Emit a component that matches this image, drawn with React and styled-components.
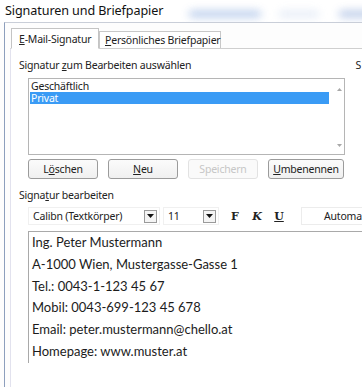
import React from "react";
import styled, { createGlobalStyle } from "styled-components";

const Global = createGlobalStyle`
  html, body { margin: 0; padding: 0; background: #fff; }
  body { font-family: "Noto Sans", "Open Sans", sans-serif; }
`;

const Window = styled.div`
  width: 362px;
  height: 387px;
  overflow: hidden;
  background: #fdfdfd;
  color: #1e1e1e;
  display: flex;
  flex-direction: column;
`;

const TitleBar = styled.div`
  height: 22px;
  display: flex;
  align-items: center;
  padding-left: 5px;
  background: #fff;
  flex-shrink: 0;
  overflow: hidden;
`;

const Title = styled.span`
  font-size: 12.6px;
  color: #111;
  letter-spacing: -0.1px;
  margin-top: -2px;
  white-space: nowrap;
  flex-shrink: 0;
`;

const Blur = styled.span`
  display: block;
  flex-shrink: 0;
  height: ${(p) => p.h || 6}px;
  width: ${(p) => p.w}px;
  margin-left: ${(p) => p.ml}px;
  margin-top: 6px;
  background: ${(p) => p.c || "#8fb2e6"};
  filter: blur(4px);
  border-radius: 4px;
  opacity: ${(p) => p.o || 0.8};
`;

const Frame = styled.div`
  flex: 1;
  margin-left: 4px;
  border-left: 1px solid #8d9fbd;
  border-top: 1px solid #c9ced8;
  display: flex;
  flex-direction: column;
  padding-left: 5px;
`;

const TabStrip = styled.div`
  display: flex;
  align-items: flex-end;
  height: 25px;
  padding-left: 1px;
  flex-shrink: 0;
`;

const Tab = styled.div`
  font-size: 10.5px;
  letter-spacing: -0.2px;
  white-space: nowrap;
  color: #222;
  background: #fff;
  border: 1px solid ${(p) => (p.$active ? "#c4c4c4" : "#c8c8c8")};
  border-bottom: ${(p) => (p.$active ? "1px solid #fff" : "none")};
  height: ${(p) => (p.$active ? 21 : 17)}px;
  box-sizing: border-box;
  padding: 0 ${(p) => (p.$active ? 7 : 5)}px;
  display: flex;
  align-items: center;
  margin-bottom: ${(p) => (p.$active ? -1 : 0)}px;
  position: relative;
  z-index: ${(p) => (p.$active ? 1 : 0)};
  width: ${(p) => p.w}px;
  flex-shrink: 0;
  u { text-decoration: underline; text-underline-offset: 1px; }
`;

const Panel = styled.div`
  flex: 1;
  border-left: 1px solid #e2e2ee;
  border-top: 1px solid #cfcfcf;
  background: #fff;
  padding-left: 8px;
  display: flex;
  flex-direction: column;
`;

const Label = styled.div`
  font-size: 10.5px;
  letter-spacing: -0.2px;
  color: #222;
  height: 14px;
  line-height: 14px;
  white-space: nowrap;
  margin-top: ${(p) => p.mt}px;
  display: flex;
  justify-content: space-between;
  padding-right: 1px;
  u { text-decoration: underline; text-underline-offset: 1px; }
`;

const Indent = styled.div`
  padding-left: 9px;
  display: flex;
  flex-direction: column;
`;

const ListBox = styled.div`
  margin-top: 6px;
  width: 317px;
  height: 77px;
  box-sizing: border-box;
  border: 1px solid #b5b5b5;
  background: #fff;
  display: flex;
  padding: 1px 0 0 1px;
`;

const Items = styled.div`
  width: 299px;
  display: flex;
  flex-direction: column;
`;

const Item = styled.div`
  font-size: 10.5px;
  letter-spacing: -0.2px;
  height: 12px;
  line-height: 12px;
  padding-left: 1px;
  color: ${(p) => (p.$sel ? "#fff" : "#1a1a1a")};
  background: ${(p) => (p.$sel ? "#3a9bf5" : "transparent")};
`;

const ScrollCol = styled.div`
  flex: 1;
  display: flex;
  flex-direction: column;
  justify-content: space-between;
  align-items: center;
  padding: 8px 0 7px 6px;
  svg { display: block; }
`;

const ButtonRow = styled.div`
  display: flex;
  gap: 10px;
  margin-top: 4px;
`;

const Button = styled.div`
  width: ${(p) => p.w}px;
  height: 20px;
  box-sizing: border-box;
  border: 1px solid ${(p) => (p.$disabled ? "#e2e2e2" : "#9b9b9b")};
  border-radius: 3px;
  background: ${(p) => (p.$disabled ? "#fafafa" : "linear-gradient(#fbfbfb, #f0f0f0)")};
  font-size: 10.5px;
  letter-spacing: -0.2px;
  white-space: nowrap;
  color: ${(p) => (p.$disabled ? "#c6c6c6" : "#222")};
  display: flex;
  align-items: center;
  justify-content: center;
  u { text-decoration: underline; text-underline-offset: 1px; }
`;

const Toolbar = styled.div`
  display: flex;
  align-items: center;
  height: 18px;
  margin-top: 5px;
`;

const Combo = styled.div`
  width: ${(p) => p.w}px;
  flex-shrink: 0;
  height: 18px;
  box-sizing: border-box;
  border: 1px solid #f0f0f0;
  display: flex;
  align-items: center;
  justify-content: space-between;
  padding: 0 2px 0 4px;
  margin-right: ${(p) => p.mr}px;
  font-size: 10.5px;
  letter-spacing: -0.2px;
  white-space: nowrap;
  color: #222;
`;

const DropBtn = styled.div`
  width: 13px;
  height: 13px;
  box-sizing: border-box;
  border: 1px solid #9a9a9a;
  background: #f4f4f4;
  display: flex;
  align-items: center;
  justify-content: center;
`;

const FmtBtn = styled.span`
  width: 22px;
  flex-shrink: 0;
  display: flex;
  justify-content: center;
  font-family: "DejaVu Serif", "Liberation Serif", serif;
  font-weight: bold;
  font-size: 11px;
  font-style: ${(p) => (p.$italic ? "italic" : "normal")};
  text-decoration: ${(p) => (p.$underline ? "underline" : "none")};
  color: #222;
`;

const ColorBox = styled.div`
  margin-left: 11px;
  flex: 1;
  min-width: 0;
  height: 18px;
  box-sizing: border-box;
  border: 1px solid #ececec;
  border-right: none;
  font-size: 10.5px;
  letter-spacing: -0.2px;
  display: flex;
  align-items: center;
  padding-left: 22px;
  color: #222;
  white-space: nowrap;
  overflow: hidden;
`;

const Editor = styled.div`
  margin-top: 6px;
  flex: 1;
  border: 1px solid #a9a9a9;
  border-right: none;
  border-bottom: none;
  background: #fff;
  padding: 0 0 0 3px;
  display: flex;
  flex-direction: column;
`;

const Line = styled.div`
  font-family: "Lato", "Open Sans", sans-serif;
  font-size: 13px;
  color: #1c1c1c;
  height: 21.8px;
  line-height: 21.8px;
  white-space: nowrap;
`;

const Up = () => (
  <svg width="5" height="3" viewBox="0 0 5 3"><path d="M0 3 L2.5 0 L5 3 Z" fill="#a8a8a8" /></svg>
);
const Down = () => (
  <svg width="5" height="3" viewBox="0 0 5 3"><path d="M0 0 L2.5 3 L5 0 Z" fill="#a8a8a8" /></svg>
);
const Caret = () => (
  <svg width="7" height="4" viewBox="0 0 7 4"><path d="M0 0 L3.5 4 L7 0 Z" fill="#111" /></svg>
);

const lines = [
  "Ing. Peter Mustermann",
  "A-1000 Wien, Mustergasse-Gasse 1",
  "Tel.: 0043-1-123 45 67",
  "Mobil: 0043-699-123 45 678",
  "Email: peter.mustermann@chello.at",
  "Homepage: www.muster.at",
];

export default function App() {
  return (
    <>
      <Global />
      <Window>
        <TitleBar>
          <Title>Signaturen und Briefpapier</Title>
          <Blur w={72} ml={26} c="#9bb7e3" />
          <Blur w={40} ml={18} c="#cfdcf0" o={0.6} />
          <Blur w={45} ml={20} c="#9bb3de" />
        </TitleBar>
        <Frame>
          <TabStrip>
            <Tab $active w={88}><span><u>E</u>-Mail-Signatur</span></Tab>
            <Tab w={122}><span><u>P</u>ersönliches Briefpapier</span></Tab>
          </TabStrip>
          <Panel>
            <Label mt={9}>
              <span>Signatur <u>z</u>um Bearbeiten auswählen</span>
              <span>S</span>
            </Label>
            <Indent>
              <ListBox>
                <Items>
                  <Item>Geschäftlich</Item>
                  <Item $sel>Privat</Item>
                </Items>
                <ScrollCol>
                  <Up />
                  <Down />
                </ScrollCol>
              </ListBox>
              <ButtonRow>
                <Button w={70}><span>L<u>ö</u>schen</span></Button>
                <Button w={70}><span><u>N</u>eu</span></Button>
                <Button w={70} $disabled>Speichern</Button>
                <Button w={76}><span><u>U</u>mbenennen</span></Button>
              </ButtonRow>
            </Indent>
            <Label mt={9}>
              <span>Signa<u>t</u>ur bearbeiten</span>
            </Label>
            <Indent>
              <Toolbar>
                <Combo w={132} mr={3}>
                  <span>Calibn (Textkörper)</span>
                  <DropBtn><Caret /></DropBtn>
                </Combo>
                <Combo w={56} mr={5}>
                  <span>11</span>
                  <DropBtn><Caret /></DropBtn>
                </Combo>
                <FmtBtn>F</FmtBtn>
                <FmtBtn $italic>K</FmtBtn>
                <FmtBtn $underline>U</FmtBtn>
                <ColorBox>Automa</ColorBox>
              </Toolbar>
              <Editor>
                {lines.map((l) => (
                  <Line key={l}>{l}</Line>
                ))}
              </Editor>
            </Indent>
          </Panel>
        </Frame>
      </Window>
    </>
  );
}
